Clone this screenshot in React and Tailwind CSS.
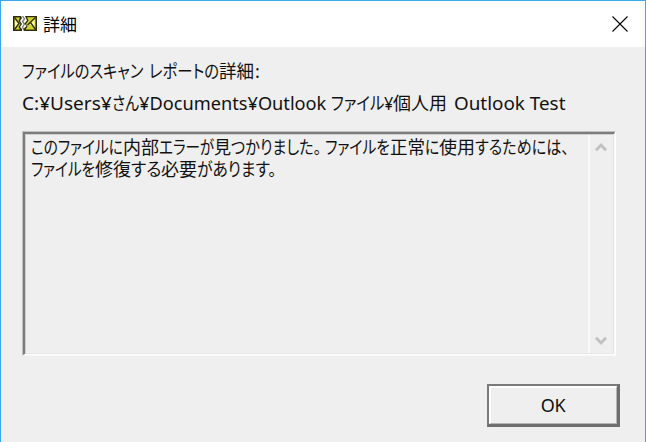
import { useLayoutEffect, useRef, useState } from 'react';

const JP = "font-['Noto_Sans','Noto_Sans_CJK_JP',sans-serif]";

const LABEL = [
  ['ファイルのスキャン', 121, 6],
  ['レポートの', 70, 0],
  ['詳細', 35, 1],
  [':', 5, 0],
];

const PATH = [
  ['C:¥Users¥', 90, 0],
  ['さん', 27, 0],
  ['¥Documents¥Outlook', 187, 5],
  ['ファイル', 53, 0],
  ['¥', 9, 0],
  ['個人用', 54, 7],
  ['Outlook Test', 111, 0],
];

const MESSAGE = [
  [
    ['このファイルに', 92, 0],
    ['内部', 36, 0],
    ['エラーが', 55, 0],
    ['見', 17, 0],
    ['つかりました。', 90, 4],
    ['ファイルを', 65, 0],
    ['正常', 35, 0],
    ['に', 14, 0],
    ['使用', 36, 0],
    ['するためには、', 94, 0],
  ],
  [
    ['ファイルを', 64, 0],
    ['修復', 36, 0],
    ['する', 30, 0],
    ['必要', 36, 0],
    ['があります。', 79, 0],
  ],
];

// Squeezes a run of text to the advance width of the dialog font
function Run({ text, width, gap }) {
  const ref = useRef(null);
  const [scale, setScale] = useState(1);

  useLayoutEffect(() => {
    setScale(width / ref.current.offsetWidth);
  }, [text, width]);

  return (
    <span className="block shrink-0" style={{ width, marginRight: gap }}>
      <span
        ref={ref}
        className="inline-block origin-left whitespace-pre"
        style={{ transform: `scaleX(${scale})` }}
      >
        {text}
      </span>
    </span>
  );
}

function Line({ runs, className }) {
  return (
    <div className={`flex h-[22px] text-[18px] leading-[22px] [font-feature-settings:'palt'] ${JP} ${className || ''}`}>
      {runs.map(([text, width, gap], i) => (
        <Run key={i} text={text} width={width} gap={gap} />
      ))}
    </div>
  );
}

// Envelope torn in two halves
function MailIcon() {
  return (
    <svg width="24" height="16" viewBox="0 0 24 16">
      <path d="M0 0h8l1 2-2 3 2 3-2 3 2 2v2H0z" fill="#2c2c0a" />
      <path d="M1.5 1.5H7L5.5 5l2 3-2 3L7 13.5H1.5z" fill="#d2d238" />
      <path d="M2 3l3.5 4.5L2 12z" fill="#ffffb4" />
      <path d="M1.5 1.5l4.5 6-4.5 6" fill="none" stroke="#33330a" strokeWidth="1.4" />
      <path d="M9.5 0l2 3-2 2.5 2 2.5-2 3 2 4" fill="none" stroke="#77776c" strokeWidth="1.3" />
      <path d="M12 0h12v15H11.5l-1-2 3-3-2-2.5 2.5-3z" fill="#2c2c0a" />
      <path d="M14 1.2h8.5v12.3h-10l2-3L13 8l2.5-3.5z" fill="#d2d230" />
      <path d="M21.5 3v9.5L16.5 8z" fill="#ffffa8" />
      <path d="M22.5 1.5L14.500 9M17.500 6.500l5 7" fill="none" stroke="#33330a" strokeWidth="1.4" />
    </svg>
  );
}

function Arrow({ down }) {
  return (
    <svg width="12" height="10" viewBox="0 0 12 10" className={down ? 'rotate-180' : ''}>
      <path d="M1 8.2 6 3l5 5.2" fill="none" stroke="#c1c1c1" strokeWidth="2.8" />
    </svg>
  );
}

export default function App() {
  return (
    <div className="flex h-[442px] w-[646px] flex-col overflow-hidden border-x border-t border-[#3ba7ec] bg-[#efefef] text-[#111]">
      <header className="flex h-[46px] shrink-0 items-center bg-white pl-3">
        <MailIcon />
        <h1 className="ml-[6px] text-[17px] leading-[22px] font-['Noto_Sans_CJK_JP',sans-serif] font-normal text-black">詳細</h1>
        <button className="mr-[17px] ml-auto" aria-label="閉じる">
          <svg width="16" height="16" viewBox="0 0 16 16" className="block">
            <path d="M.5.5l15 15M15.5.5l-15 15" stroke="#000" strokeWidth="1.1" />
          </svg>
        </button>
      </header>

      <main className="flex flex-1 flex-col pt-[13px] pl-[21px]">
        <Line runs={LABEL} />
        <Line runs={PATH} className="mt-[10px]" />

        <div className="mt-[17px] h-[225px] w-[594px] border border-t-[#c0c0c0] border-r-white border-b-[#f8f8f8] border-l-[#c0c0c0]">
          <div className="h-full border-t-2 border-r border-b border-l-2 border-t-[#7c7c7c] border-r-[#f8f8f8] border-b-white border-l-[#7c7c7c]">
            <div className="flex h-full border border-t-[#d0d0d0] border-r-[#e6e6e6] border-b-[#e6e6e6] border-l-[#d0d0d0]">
              <div className="w-[562px] shrink-0 pt-px pl-[5px]">
                <Line runs={MESSAGE[0]} />
                <Line runs={MESSAGE[1]} />
              </div>
              <div className="flex flex-1 flex-col items-center justify-between border-l-2 border-[#fafafa] pt-[7px] pr-[2px] pb-[7px]">
                <Arrow />
                <Arrow down />
              </div>
            </div>
          </div>
        </div>

        <button className="mt-[28px] ml-[465px] h-[43px] w-[133px] border-t-2 border-r-3 border-b-3 border-l-2 border-t-[#7a7a7a] border-r-[#6e6e6e] border-b-[#6e6e6e] border-l-[#7a7a7a]">
          <span className="flex h-full items-center justify-center border-t-2 border-r border-b border-l-2 border-t-white border-r-[#b4b4b4] border-b-[#b4b4b4] border-l-white pr-px pb-px text-[18px] tracking-[-0.3px] font-['Noto_Sans',sans-serif]">
            OK
          </span>
        </button>
      </main>
    </div>
  );
}
